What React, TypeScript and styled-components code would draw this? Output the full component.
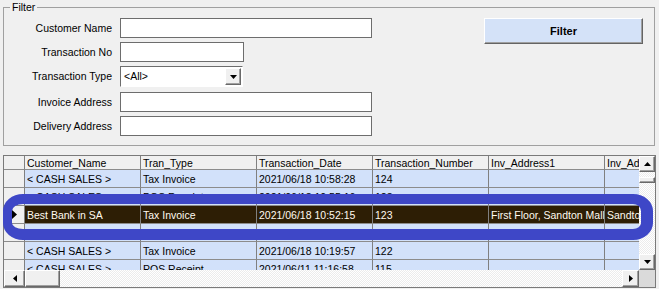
import React from 'react';
import styled, { createGlobalStyle } from 'styled-components';

const GlobalStyle = createGlobalStyle`
  html, body {
    margin: 0;
    padding: 0;
    background: #f0f0f0;
  }
  body {
    font-family: "Liberation Sans", Arial, sans-serif;
    font-size: 10.5px;
    color: #000;
  }
`;

const Page = styled.div`
  width: 659px;
  height: 289px;
  overflow: hidden;
  box-sizing: border-box;
  padding: 7px 0 0 3px;
`;

// Filter group box
const GroupBox = styled.div`
  width: 652px;
  height: 139px;
  box-sizing: border-box;
  border: 1px solid #a0a0a0;
`;

const Legend = styled.div`
  display: table;
  margin: -7px 0 0 6px;
  padding: 0 2px;
  height: 13px;
  line-height: 13px;
  background: #f0f0f0;
`;

const GroupBody = styled.div`
  display: flex;
  justify-content: space-between;
  align-items: flex-start;
  padding: 4px 11px 0 0;
`;

const FormGrid = styled.div`
  display: grid;
  grid-template-columns: 108px auto;
  grid-template-rows: 20px 20px 22px 20px 20px;
  column-gap: 8px;
  row-gap: 4px;
  align-items: start;
`;

const Label = styled.div`
  text-align: right;
  white-space: nowrap;
  line-height: 20px;
`;

const Input = styled.input<{ $width: number }>`
  width: ${(p) => p.$width}px;
  height: 20px;
  box-sizing: border-box;
  border: 1px solid #6d6d6d;
  background: #fff;
  padding: 0 3px;
  margin: 0;
  font: inherit;
  outline: none;
`;

const Combo = styled.div`
  width: 123px;
  height: 21px;
  box-sizing: border-box;
  display: flex;
  align-items: stretch;
  background: #fff;
  border-style: solid;
  border-width: 1px;
  border-color: #6d6d6d #fff #fff #6d6d6d;
  padding: 1px 1px 1px 0;
`;

const ComboText = styled.div`
  flex: 1;
  padding-left: 3px;
  line-height: 17px;
`;

const RaisedButton = styled.div<{ $w: number; $h: number }>`
  width: ${(p) => p.$w}px;
  height: ${(p) => p.$h}px;
  flex: none;
  box-sizing: border-box;
  display: flex;
  align-items: center;
  justify-content: center;
  background: #f0f0f0;
  border: 1px solid;
  border-color: #fff #696969 #696969 #fff;
  box-shadow: inset -1px -1px #a0a0a0;
`;

const FilterButton = styled.button`
  width: 159px;
  height: 26px;
  box-sizing: border-box;
  margin: 0;
  padding: 0;
  background: #d4e2f8;
  border: 1px solid;
  border-color: #fff #646464 #646464 #fff;
  box-shadow: inset -1px -1px #a0a0a0;
  font-family: "Liberation Sans", Arial, sans-serif;
  font-size: 11px;
  font-weight: bold;
  color: #000;
`;

// Data grid
const GridBox = styled.div`
  position: relative;
  margin-top: 9px;
  width: 653px;
  height: 133px;
  box-sizing: border-box;
  border: 1px solid #7a7a7a;
  display: grid;
  grid-template-columns: 635px 16px;
  grid-template-rows: 114px 17px;
`;

const RowsArea = styled.div`
  overflow: hidden;
  background: #d2e1fa;
`;

const Row = styled.div<{ $height: number; $selected?: boolean; $header?: boolean }>`
  display: grid;
  grid-template-columns: 21px repeat(6, 116px);
  height: ${(p) => p.$height}px;
  background: ${(p) => (p.$header ? '#f0f0f0' : p.$selected ? '#2d1e05' : '#d2e1fa')};
  color: ${(p) => (p.$selected ? '#fffaf0' : '#000')};
`;

const Cell = styled.div<{ $indicator?: boolean }>`
  box-sizing: border-box;
  display: flex;
  align-items: center;
  padding: 0 2px;
  white-space: nowrap;
  overflow: hidden;
  border-right: 1px solid #808080;
  border-bottom: 1px solid #8c8c8c;
  background: ${(p) => (p.$indicator ? '#f0f0f0' : 'transparent')};
  justify-content: ${(p) => (p.$indicator ? 'center' : 'flex-start')};
`;

const dither = `
  background-color: #fff;
  background-image: repeating-conic-gradient(#ececec 0 25%, #fff 0 50%);
  background-size: 2px 2px;
`;

const VScroll = styled.div`
  display: flex;
  flex-direction: column;
  ${dither}
`;

const VTrack = styled.div`
  flex: 1;
  padding-top: 5px;
`;

const HScroll = styled.div`
  display: flex;
  ${dither}
`;

const HTrack = styled.div`
  flex: 1;
`;

const Corner = styled.div`
  background: #dadada;
`;

const Annotation = styled.div`
  position: absolute;
  left: -1px;
  top: 38px;
  width: 650px;
  height: 46px;
  box-sizing: border-box;
  border-style: solid;
  border-color: #3e47c7;
  border-width: 10px 12px 11px 9px;
  border-radius: 20px / 17px;
  pointer-events: none;
`;

type Dir = 'up' | 'down' | 'left' | 'right';

const Arrow: React.FC<{ dir: Dir }> = ({ dir }) => {
  const pts: Record<Dir, string> = {
    up: '0,4 7,4 3.5,0',
    down: '0,0 7,0 3.5,4',
    left: '4,0 4,7 0,3.5',
    right: '0,0 0,7 4,3.5',
  };
  const vertical = dir === 'up' || dir === 'down';
  return (
    <svg width={vertical ? 7 : 4} height={vertical ? 4 : 7} viewBox={vertical ? '0 0 7 4' : '0 0 4 7'}>
      <polygon points={pts[dir]} fill="#000" />
    </svg>
  );
};

const RowPointer = () => (
  <svg width="5" height="9" viewBox="0 0 5 9">
    <polygon points="0,0 5,4.5 0,9" fill="#000" />
  </svg>
);

const columns = ['Customer_Name', 'Tran_Type', 'Transaction_Date', 'Transaction_Number', 'Inv_Address1', 'Inv_Address2'];

interface Txn {
  customer: string;
  type: string;
  date: string;
  number: string;
  addr1: string;
  addr2: string;
  selected?: boolean;
}

const rows: Txn[] = [
  { customer: '< CASH SALES >', type: 'Tax Invoice', date: '2021/06/18 10:58:28', number: '124', addr1: '', addr2: '' },
  { customer: '< CASH SALES >', type: 'POS Receipt', date: '2021/06/18 10:55:16', number: '123', addr1: '', addr2: '' },
  { customer: 'Best Bank in SA', type: 'Tax Invoice', date: '2021/06/18 10:52:15', number: '123', addr1: 'First Floor, Sandton Mall', addr2: 'Sandton', selected: true },
  { customer: '< CASH SALES >', type: 'POS Receipt', date: '2021/06/18 10:40:58', number: '122', addr1: '', addr2: '' },
  { customer: '< CASH SALES >', type: 'Tax Invoice', date: '2021/06/18 10:19:57', number: '122', addr1: '', addr2: '' },
  { customer: '< CASH SALES >', type: 'POS Receipt', date: '2021/06/11 11:16:58', number: '115', addr1: '', addr2: '' },
];

const App: React.FC = () => {
  return (
    <Page>
      <GlobalStyle />
      <GroupBox>
        <Legend>Filter</Legend>
        <GroupBody>
          <FormGrid>
            <Label>Customer Name</Label>
            <Input $width={252} />
            <Label>Transaction No</Label>
            <Input $width={124} />
            <Label>Transaction Type</Label>
            <Combo>
              <ComboText>&lt;All&gt;</ComboText>
              <RaisedButton $w={16} $h={17}>
                <Arrow dir="down" />
              </RaisedButton>
            </Combo>
            <Label>Invoice Address</Label>
            <Input $width={252} />
            <Label>Delivery Address</Label>
            <Input $width={252} />
          </FormGrid>
          <FilterButton>Filter</FilterButton>
        </GroupBody>
      </GroupBox>

      <GridBox>
        <RowsArea>
          <Row $height={14} $header>
            <Cell $indicator />
            {columns.map((c) => (
              <Cell key={c}>{c}</Cell>
            ))}
          </Row>
          {rows.map((r, i) => (
            <Row key={i} $height={18} $selected={r.selected}>
              <Cell $indicator>{r.selected && <RowPointer />}</Cell>
              <Cell>{r.customer}</Cell>
              <Cell>{r.type}</Cell>
              <Cell>{r.date}</Cell>
              <Cell>{r.number}</Cell>
              <Cell>{r.addr1}</Cell>
              <Cell>{r.addr2}</Cell>
            </Row>
          ))}
        </RowsArea>
        <VScroll>
          <RaisedButton $w={16} $h={16}>
            <Arrow dir="up" />
          </RaisedButton>
          <VTrack>
            <RaisedButton $w={16} $h={6} />
          </VTrack>
          <RaisedButton $w={16} $h={16}>
            <Arrow dir="down" />
          </RaisedButton>
        </VScroll>
        <HScroll>
          <RaisedButton $w={21} $h={17}>
            <Arrow dir="left" />
          </RaisedButton>
          <RaisedButton $w={35} $h={17} />
          <HTrack />
          <RaisedButton $w={17} $h={17}>
            <Arrow dir="right" />
          </RaisedButton>
        </HScroll>
        <Corner />
        <Annotation />
      </GridBox>
    </Page>
  );
};

export default App;
